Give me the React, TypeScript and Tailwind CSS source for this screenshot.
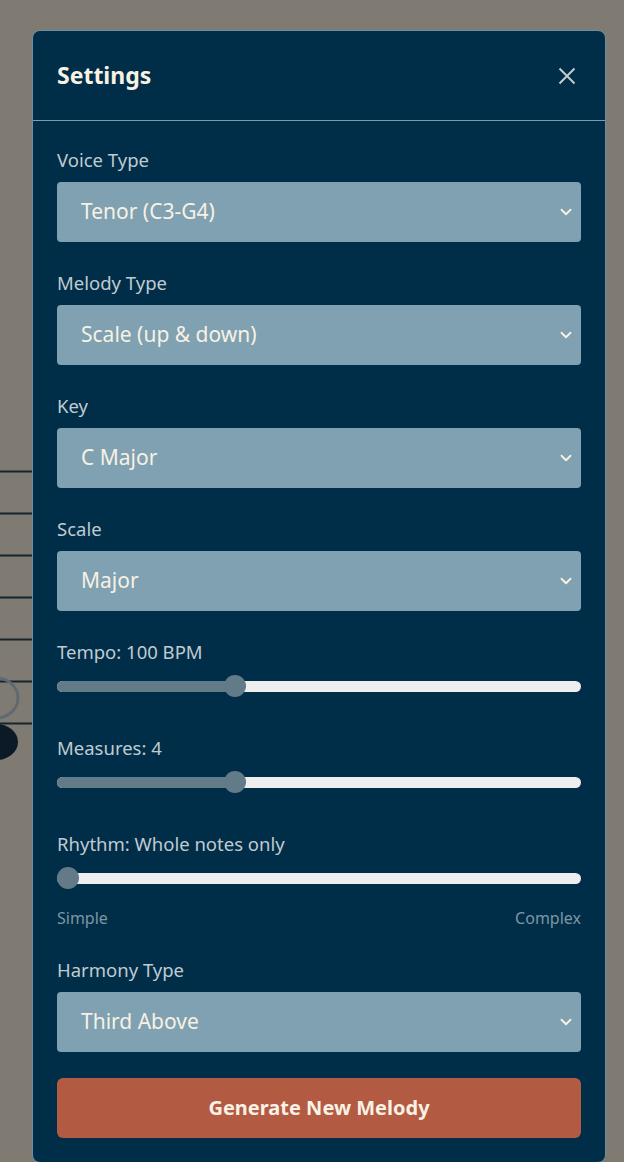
import { ChevronDown } from "lucide-react"

const font = { fontFamily: "'Noto Sans', Lato, sans-serif" }

interface SelectField {
  label: string
  value: string
}

const topFields: SelectField[] = [
  { label: "Voice Type", value: "Tenor (C3-G4)" },
  { label: "Melody Type", value: "Scale (up & down)" },
  { label: "Key", value: "C Major" },
  { label: "Scale", value: "Major" },
]

function Select({ label, value }: SelectField) {
  return (
    <div>
      <label className="block text-[18.5px] leading-[24px] text-[#c0cbd1] mb-[10px]">{label}</label>
      <div className="relative">
        <select
          defaultValue={value}
          className="w-full h-[60px] appearance-none rounded-[4px] bg-[#7fa1b1] pl-6 pr-10 text-[21px] text-[#f8f1e4] outline-none"
          style={font}
        >
          <option>{value}</option>
        </select>
        <ChevronDown
          className="pointer-events-none absolute right-[6px] top-1/2 -translate-y-1/2 h-[18px] w-[18px] text-[#f8f1e4]"
          strokeWidth={2.5}
        />
      </div>
    </div>
  )
}

function Slider({ label, pct }: { label: string; pct: number }) {
  return (
    <div>
      <div className="text-[18.5px] leading-[24px] text-[#c0cbd1] mb-[11px]">{label}</div>
      <div className="relative h-[22px] flex items-center">
        <div className="w-full h-[11px] rounded-full bg-[#eeeeee] overflow-hidden">
          <div className="h-full bg-[#637a88]" style={{ width: `calc(11px + ${pct} * (100% - 22px))` }} />
        </div>
        <div
          className="absolute top-0 h-[22px] w-[22px] rounded-full bg-[#637a88]"
          style={{ left: `calc(${pct} * (100% - 22px))` }}
        />
      </div>
    </div>
  )
}

export default function App() {
  return (
    <div className="relative h-[1162px] overflow-hidden bg-[#7f7b73]" style={font}>
      {/* staff behind the dialog */}
      <div className="pt-[460px]">
        <svg width="320" height="320" viewBox="0 0 320 320">
          {[11.5, 53.5, 95.5, 137.5, 179.5, 221.5, 263.5].map((y) => (
            <line key={y} x1="0" x2="320" y1={y} y2={y} stroke="#16242f" strokeWidth="2" />
          ))}
          <ellipse cx="-4" cy="238" rx="22" ry="20" fill="none" stroke="#5d6a72" strokeWidth="3" />
          <ellipse cx="-4" cy="282" rx="22" ry="18" fill="#0b1a26" />
        </svg>
      </div>

      <div className="absolute inset-0 pl-[32px] pr-[18px] pt-[30px]">
        <div className="rounded-[8px] border border-[#6f8ea1] bg-[#002e48]">
          <div className="h-[90px] flex items-center justify-between px-6 border-b border-[#7f9cae]">
            <h2 className="text-[23px] font-bold text-[#f8f1e4]">Settings</h2>
            <button className="w-[28px] h-[28px] flex items-center justify-center">
              <svg width="28" height="28" viewBox="0 0 28 28">
                <path d="M6.5 6.5 L21.5 21.5 M21.5 6.5 L6.5 21.5" stroke="#c3cbce" strokeWidth="2" />
              </svg>
            </button>
          </div>

          <div className="px-6 pt-[27px] pb-6">
            <div className="flex flex-col gap-[29px]">
              {topFields.map((f) => (
                <Select key={f.label} {...f} />
              ))}
            </div>

            <div className="mt-[29px] flex flex-col gap-[39px]">
              <Slider label="Tempo: 100 BPM" pct={1 / 3} />
              <Slider label="Measures: 4" pct={1 / 3} />
            </div>

            <div className="mt-[39px]">
              <Slider label="Rhythm: Whole notes only" pct={0} />
              <div className="mt-[19px] flex justify-between text-[16px] leading-[20px] text-[#7d96a4]">
                <span>Simple</span>
                <span>Complex</span>
              </div>
            </div>

            <div className="mt-[30px]">
              <Select label="Harmony Type" value="Third Above" />
            </div>

            <button className="mt-[26px] w-full h-[60px] rounded-[6px] bg-[#b35a43] text-[20px] font-bold text-[#f8f1e4]">
              Generate New Melody
            </button>
          </div>
        </div>
      </div>
    </div>
  )
}
